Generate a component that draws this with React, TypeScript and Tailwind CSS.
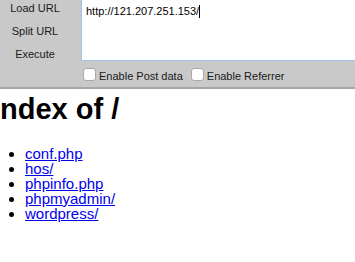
import React from 'react';

const buttons = ['Load URL', 'Split URL', 'Execute'];
const files = ['conf.php', 'hos/', 'phpinfo.php', 'phpmyadmin/', 'wordpress/'];

const Checkbox = ({ label }: { label: string }) => (
  <label className="flex items-center gap-[3px]">
    <span className="w-[13px] h-[13px] rounded-[3px] bg-white border border-[#a9a9a9]" />
    <span className="pt-[4px]">{label}</span>
  </label>
);

export default function App() {
  return (
    <div className="min-h-screen bg-white overflow-hidden font-['Liberation_Sans',Arial,sans-serif]">
      {/* hackbar toolbar */}
      <div className="flex bg-[#c9c9c9] border-b-2 border-[#a6a6a6] text-[11px] text-[#1a1a1a]">
        <div className="w-[81px] flex flex-col -mt-[3px] pr-[11px]">
          {buttons.map((b) => (
            <div key={b} className="h-[23px] leading-[23px] text-center">
              {b}
            </div>
          ))}
        </div>
        <div className="flex-1 flex flex-col">
          <div className="h-[61px] bg-white border-l border-b border-[#9fc2ea] pl-[4px] pt-[5px] leading-[13px] text-black">
            http://121.207.251.153/
            <span className="inline-block align-top w-px h-[13px] bg-black" />
          </div>
          <div className="h-[26px] flex items-center gap-[8px] pl-[2px]">
            <Checkbox label="Enable Post data" />
            <Checkbox label="Enable Referrer" />
          </div>
        </div>
      </div>

      {/* directory listing */}
      <h1 className="mt-[4px] -ml-[8px] text-[29px] leading-[32px] font-bold text-black">Index of /</h1>
      <ul className="mt-[21px] pl-[25px] list-disc text-[15px] leading-[15px]">
        {files.map((f) => (
          <li key={f}>
            <a href="#" className="text-[#0000ee] underline">
              {f}
            </a>
          </li>
        ))}
      </ul>
    </div>
  );
}
